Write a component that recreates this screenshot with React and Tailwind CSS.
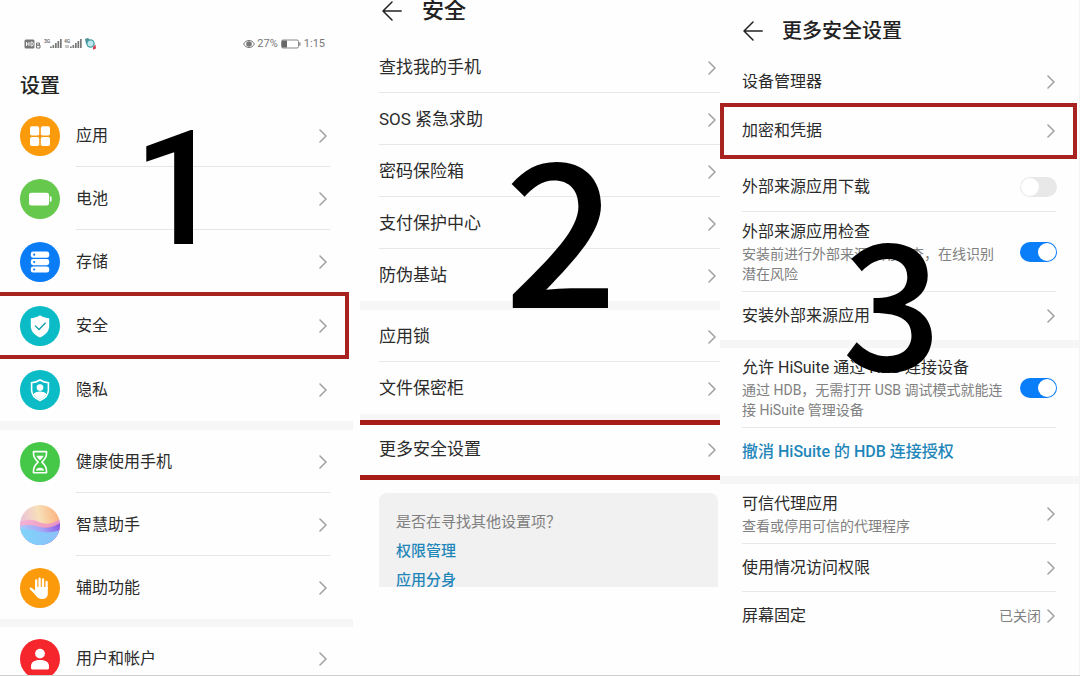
import React from "react";

function Chevron() {
  return (
    <svg viewBox="0 0 8 14" className="h-3.5 w-2 shrink-0" fill="none" stroke="#a0a0a0" strokeWidth="1.5" strokeLinecap="round" strokeLinejoin="round" aria-hidden="true">
      <path d="M1 1l6 6-6 6" />
    </svg>
  );
}

function BackArrow() {
  return (
    <svg viewBox="0 0 20 20" className="size-5" fill="none" stroke="#222" strokeWidth="1.5" strokeLinecap="round" strokeLinejoin="round" aria-hidden="true">
      <path d="M19.2 10H1M10 1L1 10l9 9" />
    </svg>
  );
}

function Badge({ color, children }) {
  return (
    <svg viewBox="0 0 40 40" className="size-10 shrink-0" aria-hidden="true">
      <circle cx="20" cy="20" r="20" fill={color} />
      {children}
    </svg>
  );
}

const icons = {
  apps: (
    <Badge color="#fb9a0a">
      <g fill="#fff">
        <rect x="10" y="10.3" width="9.2" height="9.2" rx="1.8" />
        <rect x="20.8" y="10.3" width="9.2" height="9.2" rx="1.8" />
        <rect x="10" y="20.9" width="9.2" height="9.2" rx="1.8" />
        <rect x="20.8" y="20.9" width="9.2" height="9.2" rx="1.8" />
      </g>
    </Badge>
  ),
  battery: (
    <Badge color="#66c84d">
      <rect x="9" y="13.8" width="20" height="12.6" rx="2.2" fill="#fff" />
      <path d="M29.8 17.2c1 0 1.8.6 1.8 1.4v3c0 .8-.8 1.4-1.8 1.4z" fill="#fff" />
    </Badge>
  ),
  storage: (
    <Badge color="#0a7cf6">
      {[9.6, 17, 24.4].map((y) => (
        <g key={y}>
          <rect x="10.8" y={y} width="18.4" height="6.2" rx="2.4" fill="#fff" />
          <circle cx="14.2" cy={y + 3.1} r="1.1" fill="#0a7cf6" />
        </g>
      ))}
    </Badge>
  ),
  security: (
    <Badge color="#0bbcc6">
      <path d="M20 9.2c2.8 1.8 5.800 2.800 9.200 3.100v7.500c0 5.400-3.400 9.200-9.200 11.600-5.800-2.400-9.200-6.200-9.200-11.600v-7.500c3.400-.3 6.400-1.300 9.200-3.100z" fill="#fff" />
      <path d="M15 19.600l4 3.900 6.600-6.800" fill="none" stroke="#0b9fa8" strokeWidth="1.300" />
    </Badge>
  ),
  privacy: (
    <Badge color="#0bbcc6">
      <path d="M20 10c2.600 1.600 5.300 2.500 8.400 2.800v7.200c0 4.900-3.100 8.200-8.400 10.400-5.300-2.200-8.400-5.500-8.400-10.400v-7.200c3.100-.3 5.800-1.200 8.400-2.800z" fill="none" stroke="#fff" strokeWidth="1.600" />
      <circle cx="20" cy="17.600" r="3.300" fill="#fff" />
      <path d="M13.500 24.200c1-1.900 3.400-2.700 6.500-2.700s5.500.8 6.500 2.700c-1.300 2.300-3.500 3.900-6.500 5.300-3-1.400-5.200-3-6.500-5.300z" fill="#fff" />
    </Badge>
  ),
  hourglass: (
    <Badge color="#45c748">
      <path d="M13.500 9.600h13v2.200c0 3.600-1.600 5.600-4.600 8.400 3 2.800 4.600 4.800 4.600 8.400v2.200h-13v-2.200c0-3.600 1.600-5.600 4.600-8.400-3-2.800-4.600-4.800-4.600-8.400z" fill="none" stroke="#fff" strokeWidth="1.600" strokeLinejoin="round" />
      <path d="M16.400 13.800h7.200c-.6 1.700-1.900 3-3.600 4.500-1.700-1.500-3-2.800-3.600-4.500zM15.800 28.600c.5-2 2-2.900 4.200-2.900s3.700.9 4.200 2.900z" fill="#fff" />
    </Badge>
  ),
  accessibility: (
    <Badge color="#fb9a0a">
      <g fill="none" stroke="#fff" strokeWidth="2.300" strokeLinecap="round">
        <path d="M16.200 21V12.400M19.600 20V10.600M23 20V11.400M26.600 21V14" />
        <path d="M10.800 20.600l5 4.600" />
      </g>
      <path d="M15 19h12.800v6.500c0 3.300-2 5.500-5.400 5.500-3 0-4.700-1-6.400-3.200l-5.600-6.600 1-1 3.600 2.400z" fill="#fff" />
    </Badge>
  ),
  account: (
    <Badge color="#f5262c">
      <circle cx="20" cy="14.600" r="4.900" fill="#fff" />
      <path d="M11 27.500c0-4.200 2.800-6.400 9-6.400s9 2.200 9 6.400v1.600c0 .9-.6 1.500-1.500 1.500h-15c-.9 0-1.500-.6-1.500-1.500z" fill="#fff" />
    </Badge>
  ),
  assistant: (
    <svg viewBox="0 0 40 40" className="size-10 shrink-0" aria-hidden="true">
      <defs>
        <clipPath id="orb"><circle cx="20" cy="20" r="20" /></clipPath>
        <linearGradient id="sky" x1="0" y1="0.5" x2="1" y2="0.3">
          <stop offset="0" stopColor="#e9bfdd" />
          <stop offset="0.5" stopColor="#f7e0b8" />
          <stop offset="1" stopColor="#fbb07c" />
        </linearGradient>
        <linearGradient id="rose" x1="0" y1="0" x2="1" y2="0.6">
          <stop offset="0" stopColor="#f3b4da" />
          <stop offset="0.6" stopColor="#f19fbf" />
          <stop offset="1" stopColor="#d77fdc" />
        </linearGradient>
        <linearGradient id="wave" x1="0" y1="0.3" x2="1" y2="0">
          <stop offset="0" stopColor="#a9cdfa" />
          <stop offset="0.5" stopColor="#a3a6f6" />
          <stop offset="1" stopColor="#8d52e2" />
        </linearGradient>
        <linearGradient id="sea" x1="0" y1="0" x2="1" y2="0">
          <stop offset="0" stopColor="#7fd3fb" />
          <stop offset="1" stopColor="#8cc0f8" />
        </linearGradient>
      </defs>
      <g clipPath="url(#orb)">
        <rect width="40" height="40" fill="url(#sky)" />
        <path d="M0 17c7-3 12-3 19 0s14 2 21-3v26H0z" fill="url(#rose)" />
        <path d="M0 21c8-2 13-1 20 1s14 0 20-4v22H0z" fill="url(#wave)" />
        <path d="M0 24c8-1 14 2 21 3s13 0 19-2v15H0z" fill="url(#sea)" />
      </g>
    </svg>
  ),
};

function Bars() {
  return <path d="M0 10V8.500h1.700V10zM2.500 10V7h1.700v3zM5 10V5h1.700v5zM7.500 10V3h1.700v7zM10 10V1h1.700v9z" />;
}

function StatusBar() {
  return (
    <div className="flex h-5 items-center justify-between pr-7 pl-6 font-[Roboto,sans-serif] text-[11px] leading-5 text-[#777]">
      <svg viewBox="0 0 74 14" className="h-3.5 w-[74px]" fill="#777" aria-hidden="true">
        <rect x="0.500" y="2.500" width="10" height="9" rx="1.500" />
        <path d="M2.500 5v4M5 5v4M2.500 7H5M7 5h.8a1.500 2 0 010 4H7z" stroke="#fff" strokeWidth="0.900" fill="none" />
        <path d="M12.500 6h3v2.200h-3zM12.500 8.200h3.500v2.800h-3.500z" fill="none" stroke="#777" strokeWidth="1" />
        <text x="20" y="6" fontSize="5" fontWeight="700">3G</text>
        <g transform="translate(26 1)"><Bars /></g>
        <text x="40" y="6" fontSize="5" fontWeight="700">4G</text>
        <path d="M42 8v3M44 8v3" stroke="#777" strokeWidth="0.800" />
        <g transform="translate(46 1)"><Bars /></g>
        <path d="M61 2l3-1 2 2-4 4z" fill="#4e8f95" />
        <circle cx="66.500" cy="6.500" r="3.600" fill="#bfe6ea" stroke="#43a0a8" strokeWidth="1.300" />
        <path d="M69 10l2.500-2.500.5 4-3 1.200z" fill="#d4414e" />
      </svg>
      <div className="flex items-center gap-0.5">
        <svg viewBox="0 0 12 10" className="h-2.5 w-3" aria-hidden="true">
          <path d="M0.600 5C3 .2 9 .2 11.400 5 9 9.800 3 9.800.6 5z" fill="none" stroke="#777" strokeWidth="1" />
          <circle cx="6" cy="5" r="2.800" fill="#777" />
        </svg>
        <span>27%</span>
        <svg viewBox="0 0 20 10" className="mx-px h-2.5 w-5" aria-hidden="true">
          <rect x="0.500" y="1" width="17" height="8" rx="1.500" fill="none" stroke="#888" />
          <path d="M1 1.500h5v7H1z" fill="#666" />
          <path d="M18.200 3.200h1.300v3.600h-1.300z" fill="#888" />
        </svg>
        <span>1:15</span>
      </div>
    </div>
  );
}

function Band({ className = "h-2" }) {
  return <div className={`shrink-0 bg-[#f6f6f6] ${className}`} />;
}

function SettingRow({ icon, label, divider, highlight }) {
  return (
    <li className={`relative ${highlight ? "h-[65px]" : "h-[63px]"}`}>
      <a href="#" className="flex h-full items-center gap-4 pl-5">
        {icons[icon]}
        <span className={`mr-[23px] flex h-full flex-1 items-center justify-between border-b pt-0.5 pr-[3px] ${divider ? "border-[#e6e6e6]" : "border-transparent"}`}>
          {label}
          <Chevron />
        </span>
      </a>
      {highlight && <div className="pointer-events-none absolute -inset-y-px right-1 left-0 border-y-4 border-r-4 border-[#a8231f]" />}
    </li>
  );
}

function StepNumber({ className, children }) {
  return (
    <span className={`pointer-events-none absolute leading-none font-medium text-black ${className}`}>
      {children}
    </span>
  );
}

function SettingsPanel() {
  return (
    <section aria-label="设置" className="relative overflow-y-auto pt-[34px] pr-[7px] text-base text-[#2b2b2b] [scrollbar-width:none]">
      <StatusBar />
      <h1 className="flex h-[50px] items-center pt-3.5 pl-5 text-xl font-medium text-[#222]">设置</h1>
      <ul>
        <SettingRow icon="apps" label="应用" divider />
        <SettingRow icon="battery" label="电池" divider />
        <SettingRow icon="storage" label="存储" />
        <SettingRow icon="security" label="安全" highlight />
        <SettingRow icon="privacy" label="隐私" />
      </ul>
      <Band className="h-[9px]" />
      <ul>
        <SettingRow icon="hourglass" label="健康使用手机" divider />
        <SettingRow icon="assistant" label="智慧助手" divider />
        <SettingRow icon="accessibility" label="辅助功能" />
      </ul>
      <Band />
      <ul>
        <SettingRow icon="account" label="用户和帐户" />
      </ul>
      <StepNumber className="top-[110px] left-[133px] font-[Roboto,sans-serif] text-[160px]">1</StepNumber>
    </section>
  );
}

function SecurityRow({ label, divider }) {
  return (
    <li className="h-[52px] pl-[19px]">
      <a href="#" className={`flex h-full items-center justify-between border-b pt-0.5 pr-1 ${divider ? "border-[#e8e8e8]" : "border-transparent"}`}>
        {label}
        <Chevron />
      </a>
    </li>
  );
}

function SecurityPanel() {
  return (
    <section aria-label="安全" className="relative overflow-y-auto text-[17px] text-[#2b2b2b] [scrollbar-width:none]">
      <header className="mb-5 flex h-[21px] items-center gap-5 pl-[22px]">
        <button type="button" aria-label="返回"><BackArrow /></button>
        <h2 className="text-[22px] leading-5 font-medium text-[#222]">安全</h2>
      </header>
      <ul>
        <SecurityRow label="查找我的手机" divider />
        <SecurityRow label="SOS 紧急求助" divider />
        <SecurityRow label="密码保险箱" divider />
        <SecurityRow label="支付保护中心" divider />
        <SecurityRow label="防伪基站" />
      </ul>
      <Band className="h-[9px]" />
      <ul>
        <SecurityRow label="应用锁" divider />
        <SecurityRow label="文件保密柜" />
      </ul>
      <Band className="h-1.5" />
      <a href="#" className="flex h-[60px] items-center justify-between border-y-[5px] border-[#a81c18] pr-1 pl-[19px]">
        更多安全设置
        <Chevron />
      </a>
      <div className="mt-[13px] mr-0.5 ml-[19px] flex h-[94px] flex-col items-start overflow-hidden rounded-t-lg bg-[#f1f1f1] pt-[15px] pl-[17px] text-[15px] leading-[29px]">
        <p className="text-[#808080]">是否在寻找其他设置项？</p>
        <a href="#" className="font-medium text-[#1f86ba]">权限管理</a>
        <a href="#" className="font-medium text-[#1f86ba]">应用分身</a>
      </div>
      <StepNumber className="top-[121px] left-36 font-['Noto_Sans_CJK_SC',sans-serif] text-[200px]">2</StepNumber>
    </section>
  );
}

function MoreRow({ label, note, height, divider, toggle, on, value }) {
  const text = (
    <span className="flex max-w-[264px] flex-col">
      <span className="leading-6">{label}</span>
      {note && <span className="text-sm leading-5 text-[#808080]">{note}</span>}
    </span>
  );
  const shared = `flex items-center justify-between border-b ${height} ${divider ? "border-[#e8e8e8]" : "border-transparent"}`;
  return (
    <li className="pr-[23px] pl-[22px]">
      {toggle ? (
        <label className={shared}>
          {text}
          <input
            type="checkbox"
            role="switch"
            defaultChecked={on}
            className="-mr-px flex h-5 w-[37px] shrink-0 appearance-none items-center rounded-full bg-[#e8e8e8] px-px before:size-[18px] before:rounded-full before:bg-white checked:justify-end checked:bg-[#0a7df8]"
          />
        </label>
      ) : (
        <a href="#" className={`pr-px ${shared}`}>
          {text}
          <span className="flex items-center gap-1.5 text-sm text-[#808080]">
            {value}
            <Chevron />
          </span>
        </a>
      )}
    </li>
  );
}

function MorePanel() {
  return (
    <section aria-label="更多安全设置" className="relative overflow-y-auto border-r border-[#f4f4f4] text-base text-[#2b2b2b] [scrollbar-width:none]">
      <header className="flex h-[61px] items-center gap-[19px] pl-[23px]">
        <button type="button" aria-label="返回"><BackArrow /></button>
        <h2 className="text-xl font-medium text-[#222]">更多安全设置</h2>
      </header>
      <ul>
        <MoreRow label="设备管理器" height="h-[42px]" />
      </ul>
      <a href="#" className="mr-0.5 mb-1 flex h-14 items-center justify-between border-4 border-[#a8231f] pr-[18px] pl-[18px]">
        加密和凭据
        <Chevron />
      </a>
      <ul>
        <MoreRow label="外部来源应用下载" height="h-[49px]" toggle divider />
        <MoreRow label="外部来源应用检查" note="安装前进行外部来源应用检查，在线识别潜在风险" height="h-20" toggle on divider />
        <MoreRow label="安装外部来源应用" height="h-12" />
      </ul>
      <Band />
      <ul>
        <MoreRow label="允许 HiSuite 通过 HDB 连接设备" note="通过 HDB，无需打开 USB 调试模式就能连接 HiSuite 管理设备" height="h-20" toggle on divider />
        <li className="px-[22px]">
          <button type="button" className="flex h-12 items-center font-medium text-[#1f86ba]">撤消 HiSuite 的 HDB 连接授权</button>
        </li>
      </ul>
      <Band />
      <ul>
        <MoreRow label="可信代理应用" note="查看或停用可信的代理程序" height="h-[60px]" divider />
        <MoreRow label="使用情况访问权限" height="h-12" divider />
        <MoreRow label="屏幕固定" height="h-12" value="已关闭" />
      </ul>
      <StepNumber className="top-[207px] left-[122px] font-['Noto_Sans_CJK_SC',sans-serif] text-[175px]">3</StepNumber>
    </section>
  );
}

export default function App() {
  return (
    <main className="grid h-screen grid-cols-3 border-b border-[#cfcfcf] bg-[#fefefe] font-[Roboto,'Noto_Sans_CJK_SC',sans-serif]">
      <SettingsPanel />
      <SecurityPanel />
      <MorePanel />
    </main>
  );
}
